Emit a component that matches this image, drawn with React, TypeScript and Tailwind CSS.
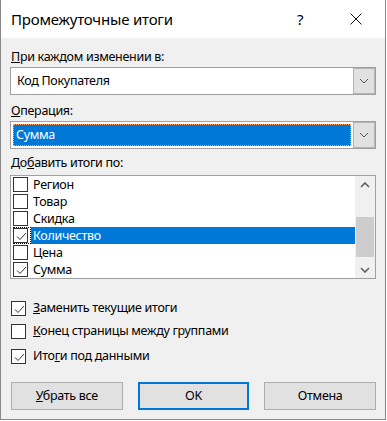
import React from "react";

const font = { fontFamily: '"Noto Sans", "Liberation Sans", sans-serif' };

function Chevron({ up = false, className = "", bold = false }: { up?: boolean; className?: string; bold?: boolean }) {
  return (
    <svg width="10" height="6" viewBox="0 0 10 6" className={className}>
      <path d={up ? "M1 5 L5 1 L9 5" : "M1 1 L5 5 L9 1"} fill="none" stroke="currentColor" strokeWidth={bold ? 1.6 : 1} />
    </svg>
  );
}

function Check() {
  return (
    <svg width="13" height="13" viewBox="0 0 13 13" className="absolute left-[1px] top-[1px]">
      <path d="M2 6.5 L5 9.5 L11 3" fill="none" stroke="#333" strokeWidth="1" />
    </svg>
  );
}

function Box({ checked = false }: { checked?: boolean }) {
  return (
    <div className="relative w-[15px] h-[15px] border border-[#333] bg-white shrink-0">
      {checked && <Check />}
    </div>
  );
}

function Combo({ text, selected = false }: { text: string; selected?: boolean }) {
  return (
    <div className="flex h-[28px] border border-[#a0a0a0] bg-white">
      <div className="flex-1 flex items-center p-[2px]">
        {selected ? (
          <div className="w-full h-full bg-[#0078d7] text-white flex items-center pl-[2px] border border-dotted border-[#f8a060]">
            {text}
          </div>
        ) : (
          <div className="pl-[4px]">{text}</div>
        )}
      </div>
      <div className="w-[22px] bg-[#e1e1e1] border border-[#b4b4b4] flex items-center justify-center text-[#555]">
        <Chevron />
      </div>
    </div>
  );
}

const items: { label: string; checked: boolean; selected?: boolean }[] = [
  { label: "Регион", checked: false },
  { label: "Товар", checked: false },
  { label: "Скидка", checked: false },
  { label: "Количество", checked: true, selected: true },
  { label: "Цена", checked: false },
  { label: "Сумма", checked: true },
];

export default function App() {
  return (
    <div className="w-[387px] h-[421px] bg-white text-[12.5px] tracking-[-0.3px] text-black leading-[16px]" style={font}>
      <div className="w-[386px] h-[420px] border-l border-r border-b border-[#888] bg-[#f0f0f0] flex flex-col">
        <div className="h-[38px] bg-white flex items-center shrink-0">
          <div className="pl-[10px] text-[15px] tracking-[-0.2px] leading-[20px]">Промежуточные итоги</div>
          <div className="flex-1" />
          <div className="w-[20px] text-center text-[15px] mr-[40px]">?</div>
          <svg width="12" height="12" viewBox="0 0 12 12" className="mr-[23px]">
            <path d="M0.5 0.5 L11.5 11.5 M11.5 0.5 L0.5 11.5" stroke="#111" strokeWidth="1" />
          </svg>
        </div>
        <div className="px-[9px] flex flex-col">
          <div className="mt-[11px] pl-[1px]"><span className="underline">П</span>ри каждом изменении в:</div>
          <div className="mt-[2px]"><Combo text="Код Покупателя" /></div>
          <div className="mt-[8px] pl-[1px]"><span className="underline">О</span>перация:</div>
          <div className="mt-[2px]"><Combo text="Сумма" selected /></div>
          <div className="mt-[6px] pl-[1px]">До<span className="underline">б</span>авить итоги по:</div>
          <div className="mt-[4px] h-[104px] border border-[#a0a0a0] bg-white flex">
            <div className="flex-1 flex flex-col pl-[2px]">
              {items.map((it) => (
                <div key={it.label} className="h-[17px] flex items-center">
                  <div className={`relative h-[17px] w-[18px] flex items-center justify-start ${it.selected ? "outline outline-1 outline-dotted outline-black -outline-offset-1" : ""}`}>
                    <Box checked={it.checked} />
                  </div>
                  <div className={`h-[17px] flex-1 flex items-center pl-[2px] ${it.selected ? "bg-[#0078d7] text-white" : ""}`}>
                    {it.label}
                  </div>
                </div>
              ))}
            </div>
            <div className="w-[20px] flex flex-col items-center bg-[#f0f0f0]">
              <div className="h-[17px] w-full flex items-center justify-center text-[#606060]">
                <Chevron up bold />
              </div>
              <div className="h-[24px]" />
              <div className="h-[40px] w-[18px] bg-[#cdcdcd]" />
              <div className="flex-1" />
              <div className="h-[17px] w-full flex items-center justify-center text-[#606060]">
                <Chevron bold />
              </div>
            </div>
          </div>
          <div className="mt-[21px] h-[16px] flex items-center gap-[7px] pl-[1px]">
            <Box checked />
            <div><span className="underline">З</span>аменить текущие итоги</div>
          </div>
          <div className="mt-[7px] h-[16px] flex items-center gap-[7px] pl-[1px]">
            <Box />
            <div><span className="underline">К</span>онец страницы между группами</div>
          </div>
          <div className="mt-[9px] h-[16px] flex items-center gap-[7px] pl-[1px]">
            <Box checked />
            <div>Ито<span className="underline">г</span>и под данными</div>
          </div>
          <div className="mt-[18px] flex gap-[15px] pl-[1px]">
            <div className="w-[112px] h-[28px] bg-[#e1e1e1] border border-[#adadad] flex items-center justify-center">
              <span><span className="underline">У</span>брать все</span>
            </div>
            <div className="w-[112px] h-[28px] bg-[#e1e1e1] border-2 border-[#0078d7] flex items-center justify-center">OK</div>
            <div className="w-[112px] h-[28px] bg-[#e1e1e1] border border-[#adadad] flex items-center justify-center">Отмена</div>
          </div>
        </div>
      </div>
    </div>
  );
}
